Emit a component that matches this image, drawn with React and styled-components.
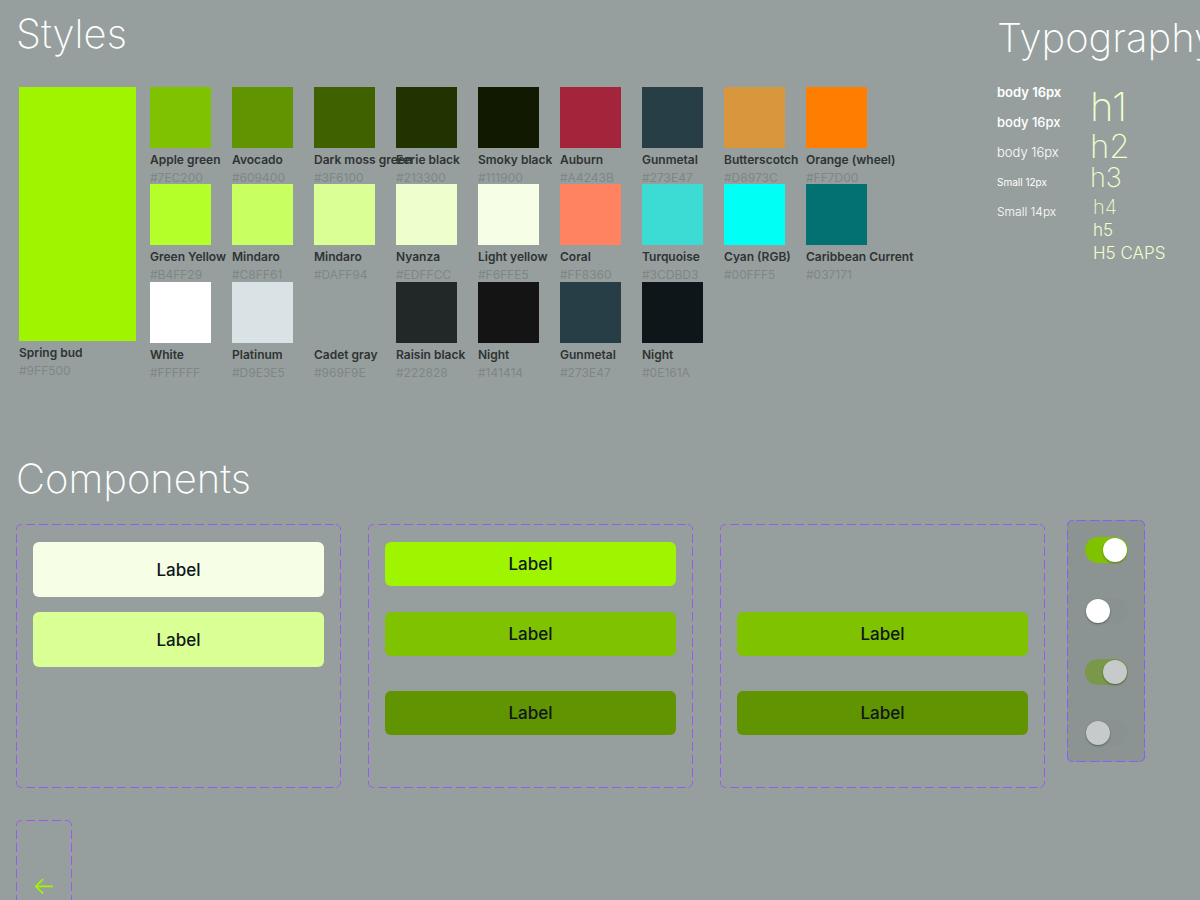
import React from "react";
import styled, { createGlobalStyle, css } from "styled-components";

const Global = createGlobalStyle`
  *, *::before, *::after { box-sizing: border-box; }
  html, body { margin: 0; background: #969f9e; }
  body { height: 100vh; overflow: hidden; font-family: Inter, "Liberation Sans", sans-serif; }
  h1, h2, h3, h4, h5, h6, p { margin: 0; font-weight: 400; }
`;

const Page = styled.main`
  display: flex;
  flex-direction: column;
  padding: 0 0 0 16px;
`;

const TopRow = styled.div`
  display: flex;
  align-items: flex-start;
  height: 450px;
`;

const Title = styled.h1`
  && { font-weight: 200; }
  font-size: 40px;
  line-height: 50px;
  color: #ffffff;
  white-space: nowrap;
`;

const StylesSection = styled.section`
  flex: 1;
  min-width: 0;
  padding-top: 9px;
`;

const Palette = styled.div`
  display: flex;
  gap: 14px;
  margin-top: 28px;
  padding-left: 3px;
`;

const Grid = styled.div`
  display: grid;
  grid-template-columns: repeat(9, 61px);
  grid-template-rows: 97px 98px 97px;
  column-gap: 21px;
`;

const Swatch = styled.figure`
  margin: 0;
  width: ${(p) => (p.$large ? 117 : 61)}px;
  white-space: nowrap;
`;

const Chip = styled.div`
  height: ${(p) => (p.$large ? 254 : 61)}px;
  background: ${(p) => p.$color};
`;

const Name = styled.div`
  margin-top: 3px;
  font-size: 12px;
  font-weight: 600;
  line-height: 18px;
  color: #2f3333;
`;

const Hex = styled.div`
  font-size: 12px;
  line-height: 18px;
  color: #7f8685;
`;

const TypeSection = styled.section`
  flex: 0 0 203px;
  padding-top: 13px;
  overflow: hidden;
`;

const TypeColumns = styled.div`
  display: flex;
  gap: 27px;
  margin-top: 20px;
`;

const BodyColumn = styled.div`
  display: flex;
  flex-direction: column;
  gap: 12px;
  width: 66px;
  white-space: nowrap;
`;

const Sample = styled.p`
  && { font-weight: ${(p) => p.$weight || 400}; }
  font-size: ${(p) => p.$size}px;
  line-height: 18px;
  color: #ffffff;
`;

const HeadingColumn = styled.div`
  display: flex;
  flex-direction: column;
  gap: 6px;
  padding-top: 5px;
  white-space: nowrap;
  color: #edffcc;
`;

const HeadingGroup = styled.div`
  display: flex;
  flex-direction: column;
  gap: ${(p) => (p.$indent ? 1 : 2)}px;
  padding-left: ${(p) => (p.$indent ? 3 : 0)}px;
`;

const Heading = styled.p`
  && { font-weight: ${(p) => p.$weight}; }
  font-size: ${(p) => p.$size}px;
  line-height: ${(p) => p.$line}px;
`;

const ComponentsSection = styled.section`
  padding: 4px 55px 0 0;
`;

const FrameRow = styled.div`
  display: flex;
  align-items: flex-start;
  gap: 22px;
  margin-top: 16px;
`;

const ButtonFrames = styled.div`
  flex: 1;
  display: grid;
  grid-template-columns: repeat(3, 1fr);
  gap: 27px;
  padding-top: 4px;
`;

const dash = (dir) => `linear-gradient(${dir}, #000 9px, transparent 9px)`;
const solid = "linear-gradient(#000, #000)";

const dashedOutline = css`
  position: relative;
  &::before {
    content: "";
    position: absolute;
    inset: 0;
    border: 1px solid ${(p) => p.$line || "#9b59f2"};
    border-radius: 5px;
    pointer-events: none;
    mask:
      ${dash("to right")} 10px 0 / 13px 2px repeat-x,
      ${dash("to right")} 10px 100% / 13px 2px repeat-x,
      ${dash("to bottom")} 0 10px / 2px 13px repeat-y,
      ${dash("to bottom")} 100% 10px / 2px 13px repeat-y,
      ${solid} 0 0 / 5px 5px no-repeat,
      ${solid} 100% 0 / 5px 5px no-repeat,
      ${solid} 0 100% / 5px 5px no-repeat,
      ${solid} 100% 100% / 5px 5px no-repeat;
  }
`;

const Frame = styled.div`
  ${dashedOutline}
  display: flex;
  flex-direction: column;
  justify-content: ${(p) => (p.$end ? "flex-end" : "flex-start")};
  gap: ${(p) => p.$gap}px;
  height: 264px;
  padding: 18px 17px 53px;
`;

const Stack = styled.div`
  display: flex;
  flex-direction: column;
  gap: 26px;
`;

const Button = styled.button`
  height: ${(p) => (p.$tall ? 55 : 44)}px;
  width: 100%;
  border: 0;
  border-radius: 6px;
  padding: 0;
  background: ${(p) => p.$color};
  font: 500 17px/24px Inter, "Liberation Sans", sans-serif;
  color: #0e161a;
`;

const ToggleFrame = styled.div`
  ${dashedOutline}
  display: flex;
  flex-direction: column;
  align-items: center;
  gap: 35px;
  width: 78px;
  padding: 17px 0 16px;
  border-radius: 5px;
  background: #8c9493;
`;

const Toggle = styled.input.attrs({ type: "checkbox" })`
  appearance: none;
  display: flex;
  align-items: center;
  justify-content: flex-start;
  width: 43px;
  height: 26px;
  margin: 0;
  padding: 0 1px;
  border-radius: 13px;
  background: #899191;
  &::before {
    content: "";
    width: 24px;
    height: 24px;
    border-radius: 50%;
    background: #ffffff;
    box-shadow: 0 1px 2px rgba(0, 0, 0, 0.35);
  }
  &:checked { justify-content: flex-end; background: #7ec200; }
  &:disabled::before { background: #c6cacb; }
  &:checked:disabled { background: #78984a; }
`;

const IconFrame = styled.div`
  ${dashedOutline}
  width: 56px;
  height: 132px;
  margin-top: 32px;
  padding: 54px 16px 0;
`;

const IconButton = styled.button`
  display: block;
  padding: 0;
  border: 0;
  background: none;
  color: #9ff500;
  svg { display: block; }
`;

const swatches = [
  ["Apple green", "#7EC200"], ["Avocado", "#609400"], ["Dark moss green", "#3F6100"],
  ["Eerie black", "#213300"], ["Smoky black", "#111900"], ["Auburn", "#A4243B"],
  ["Gunmetal", "#273E47"], ["Butterscotch", "#D8973C"], ["Orange (wheel)", "#FF7D00"],
  ["Green Yellow", "#B4FF29"], ["Mindaro", "#C8FF61"], ["Mindaro", "#DAFF94"],
  ["Nyanza", "#EDFFCC"], ["Light yellow", "#F6FFE5"], ["Coral", "#FF8360"],
  ["Turquoise", "#3CDBD3"], ["Cyan (RGB)", "#00FFF5"], ["Caribbean Current", "#037171"],
  ["White", "#FFFFFF"], ["Platinum", "#D9E3E5"], ["Cadet gray", "#969F9E"],
  ["Raisin black", "#222828"], ["Night", "#141414"], ["Gunmetal", "#273E47"],
  ["Night", "#0E161A"],
];

function ColorSwatch({ name, hex, large }) {
  return (
    <Swatch $large={large}>
      <Chip $color={hex} $large={large} />
      <figcaption>
        <Name>{name}</Name>
        <Hex>{hex}</Hex>
      </figcaption>
    </Swatch>
  );
}

export default function App() {
  return (
    <>
      <Global />
      <Page>
        <TopRow>
          <StylesSection>
            <Title>Styles</Title>
            <Palette>
              <ColorSwatch name="Spring bud" hex="#9FF500" large />
              <Grid>
                {swatches.map(([name, hex], i) => (
                  <ColorSwatch key={i} name={name} hex={hex} />
                ))}
              </Grid>
            </Palette>
          </StylesSection>
          <TypeSection>
            <Title as="h2">Typography</Title>
            <TypeColumns>
              <BodyColumn>
                <Sample $size={13} $weight={600}>body 16px</Sample>
                <Sample $size={13} $weight={500}>body 16px</Sample>
                <Sample $size={13} $weight={300}>body 16px</Sample>
                <Sample $size={10}>Small 12px</Sample>
                <Sample $size={12} $weight={300}>Small 14px</Sample>
              </BodyColumn>
              <HeadingColumn>
                <HeadingGroup>
                  <Heading $size={40} $line={38} $weight={200}>h1</Heading>
                  <Heading $size={33} $line={36} $weight={200}>h2</Heading>
                  <Heading $size={27} $line={24} $weight={200}>h3</Heading>
                </HeadingGroup>
                <HeadingGroup $indent>
                  <Heading $size={20} $line={22} $weight={200}>h4</Heading>
                  <Heading $size={17} $line={22} $weight={300}>h5</Heading>
                  <Heading $size={17} $line={22} $weight={300}>H5 CAPS</Heading>
                </HeadingGroup>
              </HeadingColumn>
            </TypeColumns>
          </TypeSection>
        </TopRow>
        <ComponentsSection>
          <Title as="h2">Components</Title>
          <FrameRow>
            <ButtonFrames>
              <Frame $gap={15}>
                <Button $color="#F6FFE5" $tall>Label</Button>
                <Button $color="#DAFF94" $tall>Label</Button>
              </Frame>
              <Frame $gap={35}>
                <Stack>
                  <Button $color="#9FF500">Label</Button>
                  <Button $color="#7EC200">Label</Button>
                </Stack>
                <Button $color="#609400">Label</Button>
              </Frame>
              <Frame $gap={35} $end>
                <Button $color="#7EC200">Label</Button>
                <Button $color="#609400">Label</Button>
              </Frame>
            </ButtonFrames>
            <ToggleFrame $line="#7b61ff">
              <Toggle aria-label="On" defaultChecked />
              <Toggle aria-label="Off" />
              <Toggle aria-label="On, disabled" defaultChecked disabled />
              <Toggle aria-label="Off, disabled" disabled />
            </ToggleFrame>
          </FrameRow>
          <IconFrame>
            <IconButton aria-label="Back">
              <svg width="24" height="24" viewBox="0 0 24 24" fill="none" stroke="currentColor" strokeWidth="1.7" strokeLinecap="round" strokeLinejoin="round">
                <path d="M20.3 12.3H3.8M10.6 5.6L3.8 12.3l6.8 6.8" />
              </svg>
            </IconButton>
          </IconFrame>
        </ComponentsSection>
      </Page>
    </>
  );
}
